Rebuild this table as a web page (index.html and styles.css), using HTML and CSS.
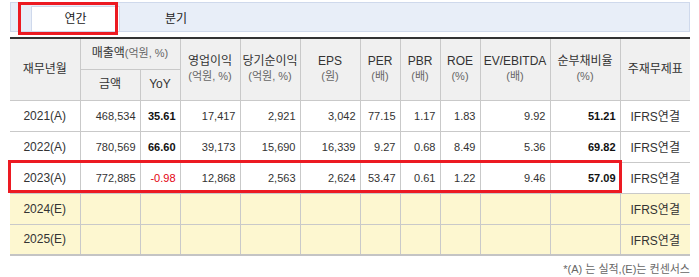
FILE: index.html
```html
<!DOCTYPE html>
<html lang="ko">
<head>
<meta charset="utf-8">
<link rel="stylesheet" href="styles.css">
</head>
<body>
<div class="page">
  <div class="tabs">
    <div class="tab active">연간</div>
    <div class="tab">분기</div>
  </div>
  <table class="fin">
    <colgroup>
      <col class="w70"><col class="w60"><col class="w40"><col class="w60"><col class="w60"><col class="w60">
      <col class="w40"><col class="w40"><col class="w40"><col class="w70"><col class="w70"><col class="w70">
    </colgroup>
    <thead>
      <tr>
        <th rowspan="2">재무년월</th>
        <th colspan="2" class="sub">매출액<span class="unit">(억원, %)</span></th>
        <th rowspan="2">영업이익<br><span class="unit">(억원, %)</span></th>
        <th rowspan="2">당기순이익<br><span class="unit">(억원, %)</span></th>
        <th rowspan="2">EPS<br><span class="unit">(원)</span></th>
        <th rowspan="2">PER<br><span class="unit">(배)</span></th>
        <th rowspan="2">PBR<br><span class="unit">(배)</span></th>
        <th rowspan="2">ROE<br><span class="unit">(%)</span></th>
        <th rowspan="2">EV/EBITDA<br><span class="unit">(배)</span></th>
        <th rowspan="2">순부채비율<br><span class="unit">(%)</span></th>
        <th rowspan="2">주재무제표</th>
      </tr>
      <tr>
        <th>금액</th>
        <th>YoY</th>
      </tr>
    </thead>
    <tbody>
      <tr>
        <td class="c">2021(A)</td><td>468,534</td><td class="b">35.61</td><td>17,417</td><td>2,921</td><td>3,042</td>
        <td>77.15</td><td>1.17</td><td>1.83</td><td>9.92</td><td class="b">51.21</td><td class="c">IFRS연결</td>
      </tr>
      <tr>
        <td class="c">2022(A)</td><td>780,569</td><td class="b">66.60</td><td>39,173</td><td>15,690</td><td>16,339</td>
        <td>9.27</td><td>0.68</td><td>8.49</td><td>5.36</td><td class="b">69.82</td><td class="c">IFRS연결</td>
      </tr>
      <tr>
        <td class="c">2023(A)</td><td>772,885</td><td class="b neg">-0.98</td><td>12,868</td><td>2,563</td><td>2,624</td>
        <td>53.47</td><td>0.61</td><td>1.22</td><td>9.46</td><td class="b">57.09</td><td class="c">IFRS연결</td>
      </tr>
      <tr class="est">
        <td class="c">2024(E)</td><td></td><td></td><td></td><td></td><td></td>
        <td></td><td></td><td></td><td></td><td></td><td class="c">IFRS연결</td>
      </tr>
      <tr class="est">
        <td class="c">2025(E)</td><td></td><td></td><td></td><td></td><td></td>
        <td></td><td></td><td></td><td></td><td></td><td class="c">IFRS연결</td>
      </tr>
    </tbody>
  </table>
  <p class="note">*(A) 는 실적,(E)는 컨센서스</p>
  <div class="mark mark-tab"></div>
  <div class="mark mark-row"></div>
</div>
</body>
</html>
```

FILE: styles.css
```css
html, body {
  margin: 0;
  padding: 0;
  background: #fff;
}
body {
  font-family: "Liberation Sans", "Noto Sans CJK KR", sans-serif;
  color: #333;
  font-size: 12px;
}
.page {
  position: relative;
  width: 699px;
  height: 277px;
  padding-top: 2px;
  box-sizing: border-box;
}
.tabs {
  margin: 0 9px 0 10px;
  height: 28px;
  border: 1px solid #cfd9ec;
  background: #e8eef8;
  display: flex;
  align-items: flex-end;
  padding-left: 20px;
}
.tab {
  height: 24px;
  line-height: 25px;
  text-align: center;
  font-size: 12px;
  color: #222;
  box-sizing: border-box;
}
.tab.active {
  width: 89px;
  height: 25px;
  background: #fff;
  border: 1px solid #cfd9ec;
  border-bottom: none;
}
.tab:not(.active) {
  width: 112px;
}
.fin {
  margin: 5px 9px 0 10px;
  width: 680px;
  table-layout: fixed;
  border-collapse: collapse;
  border-top: 2px solid #333;
  border-bottom: 2px solid #c4c4c4;
}
.w40 { width: 40px; }
.w60 { width: 60px; }
.w70 { width: 70px; }
.fin th, .fin td {
  border: 1px solid #c9c9c9;
  height: 31px;
  padding: 0;
  box-sizing: border-box;
}
.fin tr > :first-child { border-left: none; }
.fin tr > :last-child { border-right: none; }
.fin thead tr:nth-child(2) > :first-child { border-left: 1px solid #c9c9c9; }
.fin th {
  background: #f0f0f0;
  font-weight: normal;
  font-size: 12px;
  line-height: 15px;
  color: #333;
  text-align: center;
}
.fin th .unit {
  font-size: 11px;
  color: #666;
}
.fin td {
  text-align: right;
  padding-right: 4px;
  font-size: 11px;
  color: #333;
}
.fin td.c {
  text-align: center;
  padding-right: 0;
  font-size: 12px;
}
.fin td.b {
  font-weight: bold;
  color: #111;
}
.fin td.neg {
  color: #e4000f;
  font-weight: normal;
}
.fin tr.est td {
  background: #fdf7d0;
}
.note {
  margin: 4px 9px 0 0;
  text-align: right;
  font-size: 11px;
  color: #666;
}
.mark {
  position: absolute;
  border: 3px solid #ec1a22;
  box-sizing: border-box;
}
.mark-tab {
  left: 18px;
  top: 2px;
  width: 100px;
  height: 33px;
}
.mark-row {
  left: 8px;
  top: 160px;
  width: 614px;
  height: 33px;
}
```
